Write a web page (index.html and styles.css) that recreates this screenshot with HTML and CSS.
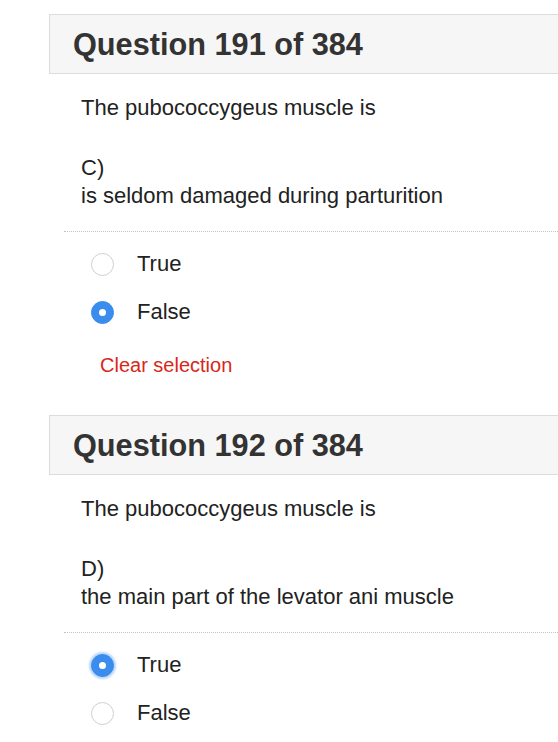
FILE: index.html
```html
<!DOCTYPE html>
<html lang="en">
<head>
<meta charset="utf-8">
<title>Questions</title>
<link rel="stylesheet" href="styles.css">
</head>
<body>
<div class="page">
  <section class="question">
    <h2 class="q-head">Question 191 of 384</h2>
    <div class="q-body">
      <p class="q-stem">The pubococcygeus muscle is</p>
      <p class="q-option">C)<br>is seldom damaged during parturition</p>
    </div>
    <div class="answers">
      <label class="answer"><span class="radio"></span><span class="answer-text">True</span></label>
      <label class="answer"><span class="radio checked"></span><span class="answer-text">False</span></label>
    </div>
    <a class="clear">Clear selection</a>
  </section>
  <section class="question">
    <h2 class="q-head">Question 192 of 384</h2>
    <div class="q-body">
      <p class="q-stem">The pubococcygeus muscle is</p>
      <p class="q-option">D)<br>the main part of the levator ani muscle</p>
    </div>
    <div class="answers">
      <label class="answer"><span class="radio checked focus"></span><span class="answer-text">True</span></label>
      <label class="answer"><span class="radio"></span><span class="answer-text">False</span></label>
    </div>
  </section>
</div>
</body>
</html>
```
FILE: styles.css
```css
html, body {
  margin: 0;
  padding: 0;
  background: #ffffff;
  overflow: hidden;
}
body {
  font-family: "Liberation Sans", Arial, Helvetica, sans-serif;
  color: #222222;
}
.page {
  padding-top: 14px;
  margin-left: 49px;
}
.question {
  display: flex;
  flex-direction: column;
  margin-bottom: 36px;
}
.q-head {
  margin: 0;
  box-sizing: content-box;
  padding: 2px 0 0 23px;
  height: 56px;
  line-height: 56px;
  font-size: 30.7px;
  font-weight: bold;
  color: #333333;
  background: #f6f6f6;
  border: 1px solid #dcdcdc;
  border-right: none;
}
.q-body {
  padding: 20px 0 0 32px;
  font-size: 22px;
  line-height: 28px;
}
.q-stem {
  margin: 0 0 32px 0;
}
.q-option {
  margin: 0;
}
.answers {
  margin: 21px 0 0 15px;
  border-top: 1px dotted #c4c4c4;
  padding: 8px 0 0 27px;
  display: flex;
  flex-direction: column;
}
.answer {
  display: flex;
  align-items: center;
  height: 48px;
  font-size: 22px;
}
.radio {
  width: 21px;
  height: 21px;
  border: 1px solid #cfcfcf;
  border-radius: 50%;
  box-sizing: content-box;
  margin-right: 23px;
  flex: none;
  display: flex;
  align-items: center;
  justify-content: center;
  background: #fff;
}
.radio.checked {
  background: #3b8ded;
  border-color: #3b8ded;
}
.radio.checked::after {
  content: "";
  width: 7px;
  height: 7px;
  border-radius: 50%;
  background: #ffffff;
}
.radio.focus {
  box-shadow: 0 0 2px 2px rgba(59, 141, 237, 0.35);
}
.answer-text {
  color: #222222;
}
.clear {
  margin: 15px 0 0 51px;
  font-size: 20px;
  line-height: 28px;
  color: #d8271a;
  cursor: pointer;
}
```
